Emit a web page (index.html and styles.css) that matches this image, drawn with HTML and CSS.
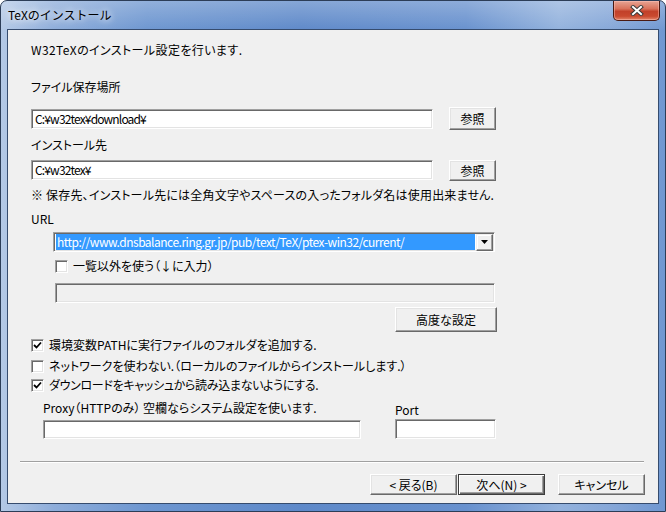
FILE: index.html
```html
<!DOCTYPE html>
<html lang="ja">
<head>
    <meta charset="UTF-8">
    <title>TeXのインストール</title>
    <link rel="stylesheet" href="styles.css">
</head>
<body>
    <div class="window">
        <div class="titlebar">
            <span class="title">TeXのインストール</span>
            <button class="close-btn">
                <svg width="14" height="11" viewBox="0 0 14 11">
                    <path d="M3 2 L11 9 M11 2 L3 9" stroke="#3a3a3a" stroke-width="4" stroke-linecap="square"/>
                    <path d="M3 2 L11 9 M11 2 L3 9" stroke="#fff" stroke-width="2" stroke-linecap="square"/>
                </svg>
            </button>
        </div>

        <div class="client">
            <p class="text intro">W32TeXのインストール設定を行います.</p>

            <p class="text label-save">ファイル保存場所</p>
            <div class="path-row row-save">
                <div class="field path-field">C:¥w32tex¥download¥</div>
                <button class="btn browse-btn">参照</button>
            </div>

            <p class="text label-dest">インストール先</p>
            <div class="path-row row-dest">
                <div class="field path-field">C:¥w32tex¥</div>
                <button class="btn browse-btn">参照</button>
            </div>

            <p class="text notice">※ 保存先、インストール先には全角文字やスペースの入ったフォルダ名は使用出来ません.</p>
            <p class="text url-label">URL</p>

            <div class="field combo">
                <span class="combo-value">http://www.dnsbalance.ring.gr.jp/pub/text/TeX/ptex-win32/current/</span>
                <span class="combo-arrow">
                    <svg width="7" height="4" viewBox="0 0 7 4"><path d="M0 0 H7 L3.5 4 Z" fill="#000"/></svg>
                </span>
            </div>

            <label class="check-row other-url">
                <span class="checkbox"></span>
                <span class="text">一覧以外を使う（↓に入力）</span>
            </label>
            <div class="field disabled-field"></div>

            <button class="btn advanced-btn">高度な設定</button>

            <label class="check-row opt-path">
                <span class="checkbox checked">
                    <svg width="9" height="9" viewBox="0 0 9 9"><path d="M1 4 L3.5 6.5 L8 1.5" stroke="#000" stroke-width="1.8" fill="none"/></svg>
                </span>
                <span class="text">環境変数PATHに実行ファイルのフォルダを追加する.</span>
            </label>
            <label class="check-row opt-local">
                <span class="checkbox"></span>
                <span class="text">ネットワークを使わない.（ローカルのファイルからインストールします.）</span>
            </label>
            <label class="check-row opt-cache">
                <span class="checkbox checked">
                    <svg width="9" height="9" viewBox="0 0 9 9"><path d="M1 4 L3.5 6.5 L8 1.5" stroke="#000" stroke-width="1.8" fill="none"/></svg>
                </span>
                <span class="text cache-text">ダウンロードをキャッシュから読み込まないようにする.</span>
            </label>

            <div class="proxy-labels">
                <span class="text proxy-label">Proxy（HTTPのみ） 空欄ならシステム設定を使います.</span>
                <span class="text port-label">Port</span>
            </div>
            <div class="proxy-fields">
                <div class="field proxy-field"></div>
                <div class="field port-field"></div>
            </div>

            <div class="separator"></div>

            <div class="nav-buttons">
                <button class="btn nav-btn">&lt; 戻る(B)</button>
                <button class="btn nav-btn default-btn">次へ(N) &gt;</button>
                <button class="btn nav-btn cancel-btn">キャンセル</button>
            </div>
        </div>
    </div>
</body>
</html>
```

FILE: styles.css
```css
/* Reset */
* {
    margin: 0;
    padding: 0;
    box-sizing: border-box;
}

body {
    font-family: "Noto Sans CJK JP", sans-serif;
    font-size: 12px;
    color: #000;
    background: #fff;
}

/* Window frame */
.window {
    width: 666px;
    height: 512px;
    display: flex;
    flex-direction: column;
    padding: 0 6px 7px 6px;
    border: 1px solid #2c3d57;
    border-radius: 7px 7px 0 0;
    background:
        linear-gradient(to bottom, rgba(255, 255, 255, 0.25), rgba(255, 255, 255, 0) 30px),
        linear-gradient(to right, #b4c9e6 0%, #8eadda 8%, #6d96d0 22%, #5e89c9 45%, #6891ce 70%, #93b2dd 84%, #86a7d8 92%, #6f97d1 100%);
}

.titlebar {
    height: 28px;
    display: flex;
    align-items: flex-start;
}

.title {
    margin-top: 6px;
    margin-left: 1px;
    font-size: 12px;
    line-height: 16px;
    text-shadow: 0 0 6px rgba(255, 255, 255, 0.95), 0 0 10px rgba(255, 255, 255, 0.8);
}

.close-btn {
    margin-left: auto;
    margin-right: -1px;
    width: 47px;
    height: 20px;
    display: flex;
    align-items: center;
    justify-content: center;
    border: 1px solid #4a1a12;
    border-top: none;
    border-radius: 0 0 5px 5px;
    background: linear-gradient(to bottom, #e6a494 0%, #d9735c 40%, #c2412a 55%, #c9492f 80%, #e2856a 100%);
    box-shadow: inset 0 0 0 1px rgba(255, 200, 190, 0.45);
}

/* Client area */
.client {
    flex: 1;
    background: #f0f0f0;
    border: 1px solid #364c6e;
    padding: 13px 0 0 23px;
    font-feature-settings: "palt";
}

.text {
    display: block;
    line-height: 14px;
    white-space: nowrap;
}

.intro { letter-spacing: 0.4px; }
.label-save { margin-top: 23px; }
.label-dest { margin-top: 8px; }
.notice { margin-top: 7px; letter-spacing: 0.2px; }
.url-label { margin-top: 10px; }
.cache-text { letter-spacing: -0.3px; }

/* Sunken edit fields */
.field {
    background: #fff;
    border: 1px solid;
    border-color: #a0a0a0 #fff #fff #a0a0a0;
    box-shadow: inset 1px 1px #696969, inset -1px -1px #e3e3e3;
}

.path-row {
    display: flex;
    align-items: flex-start;
    gap: 16px;
}

.row-save { margin-top: 13px; }
.row-save .path-field { margin-top: 2px; }
.row-dest { margin-top: 8px; }
.row-dest .browse-btn { height: 21px; }

.path-field {
    width: 402px;
    height: 20px;
    padding: 2px 0 0 3px;
    line-height: 14px;
    letter-spacing: -0.85px;
}

/* Raised buttons */
.btn {
    font: inherit;
    color: #000;
    background: #f0f0f0;
    border: 1px solid;
    border-color: #fff #696969 #696969 #fff;
    box-shadow: inset -1px -1px #a0a0a0, inset 1px 1px #e3e3e3;
}

.browse-btn {
    width: 47px;
    height: 23px;
}

/* Combo box */
.combo {
    margin-top: 6px;
    margin-left: 22px;
    width: 442px;
    height: 20px;
    display: flex;
    align-items: center;
    padding: 0 1px 0 2px;
}

.combo-value {
    flex: 1;
    height: 16px;
    line-height: 15px;
    padding-left: 1px;
    background: #3399ff;
    color: #fff;
    white-space: nowrap;
    overflow: hidden;
    letter-spacing: -0.5px;
}

.combo-arrow {
    width: 17px;
    height: 17px;
    margin-left: 1px;
    display: flex;
    align-items: center;
    justify-content: center;
    background: #f0f0f0;
    border: 1px solid;
    border-color: #f0f0f0 #696969 #696969 #f0f0f0;
    box-shadow: inset -1px -1px #a0a0a0, inset 1px 1px #fff;
}

/* Checkboxes */
.check-row {
    display: flex;
    align-items: center;
    gap: 5px;
    height: 14px;
}

.checkbox {
    width: 13px;
    height: 13px;
    display: flex;
    align-items: center;
    justify-content: center;
    background: #fff;
    border: 1px solid;
    border-color: #a0a0a0 #fff #fff #a0a0a0;
    box-shadow: inset 1px 1px #696969, inset -1px -1px #e3e3e3;
}

.other-url {
    margin-top: 7px;
    margin-left: 24px;
}

.disabled-field {
    margin-top: 10px;
    margin-left: 24px;
    width: 440px;
    height: 20px;
    background: #f0f0f0;
}

.advanced-btn {
    display: block;
    margin-top: 4px;
    margin-left: 364px;
    width: 102px;
    height: 25px;
}

.opt-path { margin-top: 6px; }
.opt-local { margin-top: 7px; }
.opt-cache { margin-top: 5px; }

/* Proxy */
.proxy-labels {
    margin-top: 9px;
    margin-left: 12px;
    height: 14px;
    display: flex;
    align-items: flex-start;
}

.proxy-label { width: 352px; }
.port-label { margin-top: 2px; }

.proxy-fields {
    margin-top: 4px;
    margin-left: 12px;
    display: flex;
    align-items: flex-start;
    gap: 34px;
}

.proxy-field {
    width: 318px;
    height: 19px;
    margin-top: 1px;
}

.port-field {
    width: 101px;
    height: 20px;
}

.separator {
    margin-top: 22px;
    margin-left: -11px;
    width: 624px;
    height: 2px;
    border-top: 1px solid #a0a0a0;
    border-bottom: 1px solid #fff;
}

/* Wizard navigation */
.nav-buttons {
    margin-top: 11px;
    margin-left: 339px;
    display: flex;
    gap: 1px;
}

.nav-btn {
    width: 87px;
    height: 21px;
}

.default-btn {
    border: 1px solid #3c3c3c;
    box-shadow: inset 1px 1px #fff, inset -1px -1px #696969, inset -2px -2px #a0a0a0;
}

.cancel-btn { margin-left: 12px; }
```
